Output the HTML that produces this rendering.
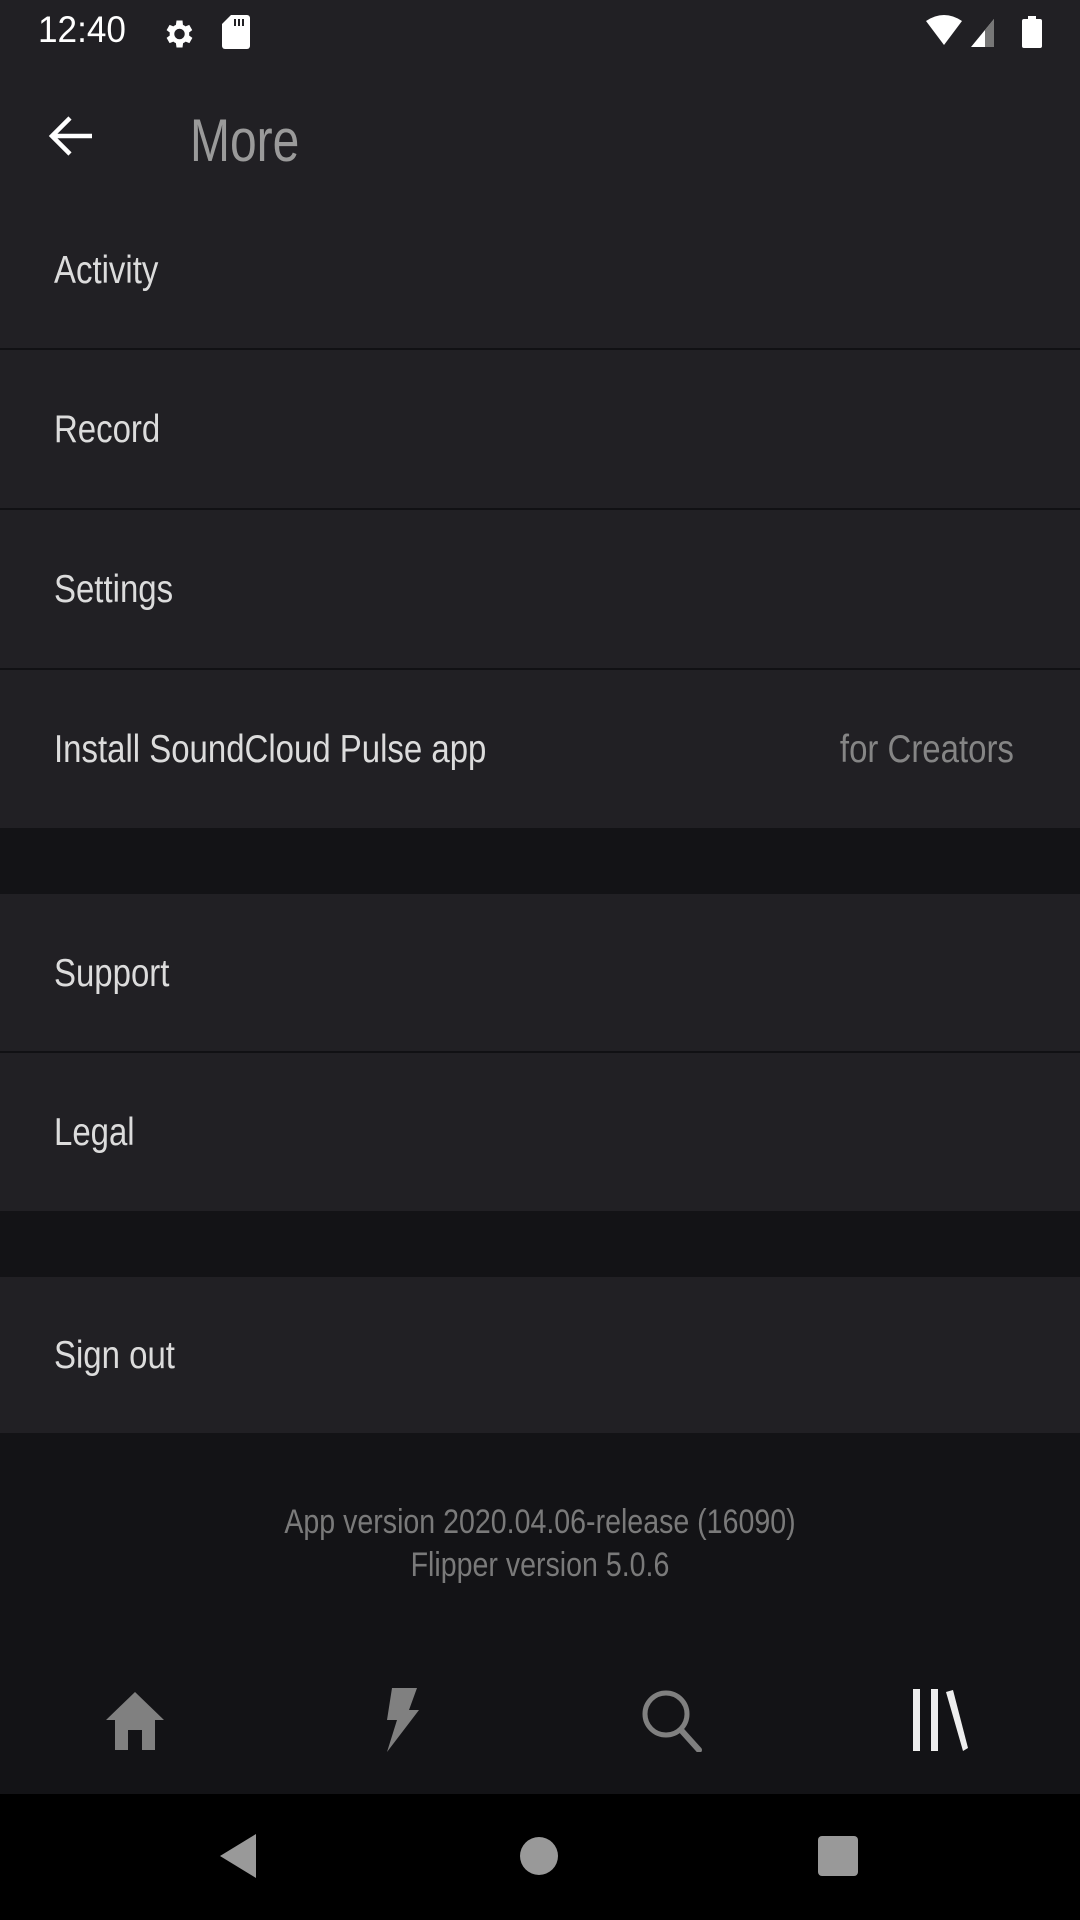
<!DOCTYPE html>
<html><head><meta charset="utf-8"><style>
*{margin:0;padding:0;box-sizing:border-box}
body{width:1080px;height:1920px;background:#131316;position:relative;overflow:hidden;font-family:"Liberation Sans",sans-serif;}
.a{position:absolute;left:0;width:1080px}
.row{position:absolute;left:0;width:1080px;background:#212024;color:#dcdcdc;font-size:39px;}
.row span{position:absolute;left:54px;top:50%;transform:translateY(-48%) scaleX(0.845);transform-origin:left center;white-space:nowrap}
.row span.r{left:auto;right:66px;transform-origin:right center;color:#858585}
.div{position:absolute;left:0;width:1080px;height:2px;background:#111114}
</style></head><body>
<div class="a" style="top:0;height:350px;background:#212024"></div>
<div style="position:absolute;left:38px;top:9px;color:#fff;font-size:37px;transform:scaleX(0.95);transform-origin:left">12:40</div>
<svg style="position:absolute;left:160px;top:16px" width="36" height="36" viewBox="0 0 24 24"><path fill="#fff" d="M19.4 13a7.5 7.5 0 000-2l2.1-1.600-2-3.5-2.5 1a7 7 0 00-1.7-1L15 3h-4l-.4 2.9a7 7 0 00-1.7 1l-2.5-1-2 3.5L6.5 11a7.5 7.5 0 000 2l-2.1 1.6 2 3.5 2.5-1a7 7 0 001.7 1L11 21h4l.4-2.9a7 7 0 001.7-1l2.5 1 2-3.5zM13 15.5A3.5 3.5 0 1113 8.5a3.5 3.5 0 010 7z"/></svg>
<svg style="position:absolute;left:222px;top:15px" width="28" height="34" viewBox="0 0 28 34"><path fill="#fff" d="M9 0h16a3 3 0 013 3v28a3 3 0 01-3 3H3a3 3 0 01-3-3V9z"/><rect x="12" y="4" width="2" height="7" fill="#212024"/><rect x="16" y="4" width="2" height="7" fill="#212024"/><rect x="20" y="4" width="2" height="7" fill="#212024"/></svg>
<svg style="position:absolute;left:924px;top:15px" width="120" height="34" viewBox="0 0 120 34"><path fill="#fff" d="M2 6Q20-6 38 6L20 30z"/><path fill="#fff" d="M47 32L70 4v28z"/><path fill="#777" d="M61 15L70 4v28h-9z"/><rect x="98" y="4" width="20" height="29" rx="2" fill="#fff"/><rect x="104" y="1" width="8" height="4" fill="#fff"/></svg>
<svg style="position:absolute;left:48px;top:114px" width="46" height="44" viewBox="0 0 46 44"><path d="M44 22H5M22 4L4 22l18 18" stroke="#fff" stroke-width="4.5" fill="none"/></svg>
<div style="position:absolute;left:190px;top:106px;color:#9a9a9a;font-size:60px;transform:scaleX(0.8);transform-origin:left">More</div>

<div class="row" style="top:190px;height:159px"><span>Activity</span></div>
<div class="div" style="top:348px"></div>
<div class="row" style="top:350px;height:158px"><span>Record</span></div>
<div class="div" style="top:508px"></div>
<div class="row" style="top:510px;height:158px"><span>Settings</span></div>
<div class="div" style="top:668px"></div>
<div class="row" style="top:670px;height:158px"><span>Install SoundCloud Pulse app</span><span class="r">for Creators</span></div>

<div class="row" style="top:894px;height:157px"><span>Support</span></div>
<div class="div" style="top:1051px"></div>
<div class="row" style="top:1053px;height:158px"><span>Legal</span></div>

<div class="row" style="top:1277px;height:156px"><span>Sign out</span></div>

<div style="position:absolute;left:0;width:1080px;top:1501px;text-align:center;color:#7a7a7a;font-size:34px;line-height:43px;transform:scaleX(0.84);transform-origin:center">App version 2020.04.06-release (16090)<br>Flipper version 5.0.6</div>

<svg style="position:absolute;left:104px;top:1690px" width="62" height="62" viewBox="0 0 62 62"><path fill="#808080" d="M31 2L2 30h9v30h13V40h14v20h13V30h9z"/></svg>
<svg style="position:absolute;left:384px;top:1688px" width="40" height="64" viewBox="0 0 40 64"><path fill="#808080" d="M8 0h25l-8 22h10L3 64l10-32H3z"/></svg>
<svg style="position:absolute;left:640px;top:1688px" width="66" height="64" viewBox="0 0 66 64"><circle cx="26" cy="26" r="21" stroke="#808080" stroke-width="5" fill="none"/><path d="M41 42l18 20" stroke="#808080" stroke-width="6" stroke-linecap="round"/></svg>
<svg style="position:absolute;left:910px;top:1688px" width="68" height="64" viewBox="0 0 68 64"><rect x="3" y="1" width="7" height="62" fill="#eee"/><rect x="21" y="1" width="7" height="62" fill="#eee"/><path fill="#eee" d="M36 4l7-2 15 58-5 3z"/></svg>

<div class="a" style="top:1794px;height:126px;background:#000"></div>
<svg style="position:absolute;left:218px;top:1833px" width="40" height="46" viewBox="0 0 40 46"><path fill="#999" d="M38 1v44L2 23z"/></svg>
<div style="position:absolute;left:520px;top:1837px;width:38px;height:38px;border-radius:50%;background:#999"></div>
<div style="position:absolute;left:818px;top:1836px;width:40px;height:40px;border-radius:4px;background:#999"></div>
</body></html>
